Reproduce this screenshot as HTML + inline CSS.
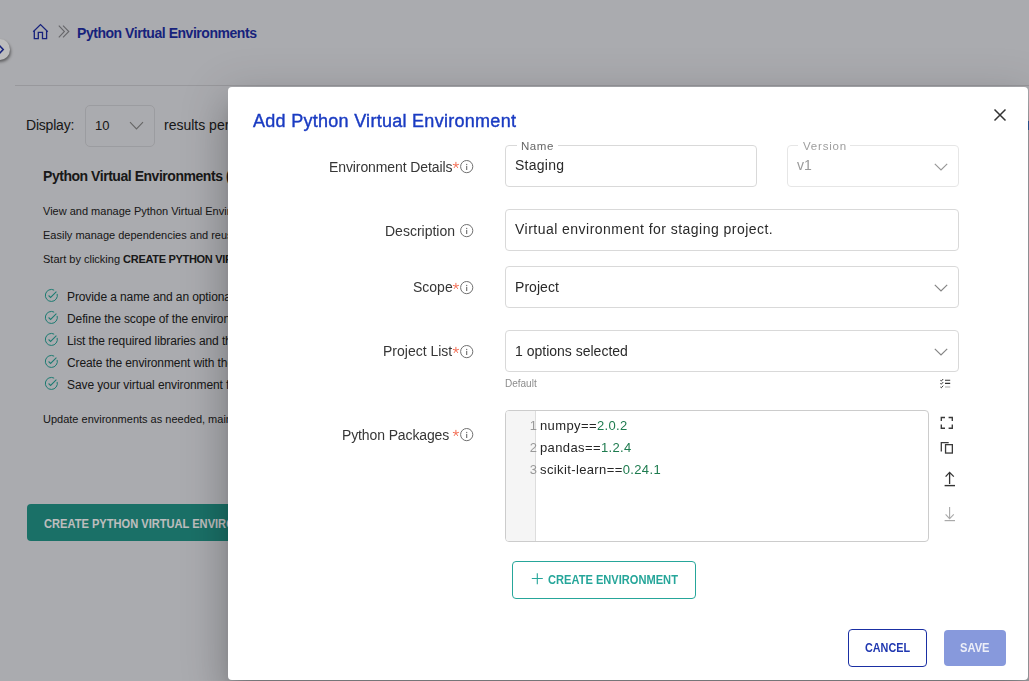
<!DOCTYPE html>
<html><head><meta charset="utf-8">
<style>
*{box-sizing:border-box;margin:0;padding:0}
html,body{width:1029px;height:681px;overflow:hidden;background:#fff;font-family:"Liberation Sans",sans-serif}
.t{position:absolute;white-space:nowrap;line-height:1}
.r{position:absolute;display:block}
#page{position:absolute;left:0;top:0;width:1029px;height:681px;background:#e6e7ec;overflow:hidden}
#overlay{position:absolute;left:0;top:0;width:1029px;height:681px;background:rgba(0,0,0,0.26)}
#modal{will-change:transform;position:absolute;left:228px;top:87px;width:800px;height:593px;background:#fff;border-radius:4px;overflow:hidden;
 box-shadow:0px 11px 15px -7px rgba(0,0,0,0.2),0px 24px 38px 3px rgba(0,0,0,0.14),0px 9px 46px 8px rgba(0,0,0,0.12)}
</style></head>
<body>
<div id="page">
<svg class="r" style="left:32px;top:23px" width="17" height="17" viewBox="0 0 17 17"><path d="M1.2 8.8 L8.5 1.6 L15.8 8.8 M2.3 8 V15.6 H6.3 V9.3 H10.5 V15.6 H14.6 V8" fill="none" stroke="#1f2fa8" stroke-width="1.3" stroke-linejoin="miter"/></svg>
<svg class="r" style="left:57px;top:24px" width="14" height="15" viewBox="0 0 14 15"><path d="M1.8 1.6 L7.4 7.5 L1.8 13.4 M6.0 1.6 L11.8 7.5 L6.0 13.4" fill="none" stroke="#8a8a8f" stroke-width="1.1"/></svg>
<div class="t" style="left:77px;top:26px;font-size:14px;color:#1f2fa8;font-weight:bold;letter-spacing:-0.46px;">Python Virtual Environments</div>
<div class="r" style="left:-11px;top:39px;width:21px;height:21px;border-radius:50%;background:#fff;box-shadow:1px 2px 3px rgba(0,0,0,0.45)"></div>
<svg class="r" style="left:-2px;top:44px" width="8" height="11" viewBox="0 0 8 11"><path d="M1 1 L5.2 5.5 L1 10" fill="none" stroke="#1f2fa8" stroke-width="1.6"/></svg>
<div class="r" style="left:15px;top:85px;width:1014px;height:1px;background:#cdced3"></div>
<div class="t" style="left:26px;top:118px;font-size:14px;color:#222;letter-spacing:-0.2px;">Display:</div>
<div class="r" style="left:85px;top:105px;width:70px;height:42px;border:1px solid #d2d3d8;border-radius:5px"></div>
<div class="t" style="left:95px;top:119px;font-size:13px;color:#222;">10</div>
<svg class="r" style="left:129px;top:121px" width="15" height="10" viewBox="0 0 15 10"><path d="M1 1.2 L7.5 8 L14 1.2" fill="none" stroke="#8a8a8a" stroke-width="1.1"/></svg>
<div class="t" style="left:164px;top:118px;font-size:14px;color:#222;">results per page</div>
<div class="t" style="left:43px;top:169px;font-size:14px;color:#222;font-weight:bold;letter-spacing:-0.46px;">Python Virtual Environments (Beta)</div>
<div class="t" style="left:43px;top:206px;font-size:11px;color:#222;">View and manage Python Virtual Environments for your projects.</div>
<div class="t" style="left:43px;top:230px;font-size:11px;color:#222;">Easily manage dependencies and reuse environments across projects.</div>
<div class="t" style="left:43px;top:254px;font-size:11px;color:#222;">Start by clicking <b style="letter-spacing:-0.3px">CREATE PYTHON VIRTUAL ENVIRONMENT</b> button.</div>
<svg class="r" style="left:44px;top:288px" width="15" height="15" viewBox="0 0 15 15"><path d="M13.15 5.90 A6.0 6.0 0 1 1 10.17 2.15" fill="none" stroke="#26a69a" stroke-width="1.0"/><path d="M4.6 7.5 L6.6 9.4 L12.4 3.7" fill="none" stroke="#26a69a" stroke-width="1.05"/></svg>
<div class="t" style="left:67px;top:291px;font-size:12px;color:#222;letter-spacing:-0.1px;">Provide a name and an optional description.</div>
<svg class="r" style="left:44px;top:310px" width="15" height="15" viewBox="0 0 15 15"><path d="M13.15 5.90 A6.0 6.0 0 1 1 10.17 2.15" fill="none" stroke="#26a69a" stroke-width="1.0"/><path d="M4.6 7.5 L6.6 9.4 L12.4 3.7" fill="none" stroke="#26a69a" stroke-width="1.05"/></svg>
<div class="t" style="left:67px;top:313px;font-size:12px;color:#222;letter-spacing:-0.1px;">Define the scope of the environment.</div>
<svg class="r" style="left:44px;top:332px" width="15" height="15" viewBox="0 0 15 15"><path d="M13.15 5.90 A6.0 6.0 0 1 1 10.17 2.15" fill="none" stroke="#26a69a" stroke-width="1.0"/><path d="M4.6 7.5 L6.6 9.4 L12.4 3.7" fill="none" stroke="#26a69a" stroke-width="1.05"/></svg>
<div class="t" style="left:67px;top:335px;font-size:12px;color:#222;letter-spacing:-0.1px;">List the required libraries and their versions.</div>
<svg class="r" style="left:44px;top:354px" width="15" height="15" viewBox="0 0 15 15"><path d="M13.15 5.90 A6.0 6.0 0 1 1 10.17 2.15" fill="none" stroke="#26a69a" stroke-width="1.0"/><path d="M4.6 7.5 L6.6 9.4 L12.4 3.7" fill="none" stroke="#26a69a" stroke-width="1.05"/></svg>
<div class="t" style="left:67px;top:357px;font-size:12px;color:#222;letter-spacing:-0.1px;">Create the environment with the packages.</div>
<svg class="r" style="left:44px;top:376px" width="15" height="15" viewBox="0 0 15 15"><path d="M13.15 5.90 A6.0 6.0 0 1 1 10.17 2.15" fill="none" stroke="#26a69a" stroke-width="1.0"/><path d="M4.6 7.5 L6.6 9.4 L12.4 3.7" fill="none" stroke="#26a69a" stroke-width="1.05"/></svg>
<div class="t" style="left:67px;top:379px;font-size:12px;color:#222;letter-spacing:-0.1px;">Save your virtual environment for reuse.</div>
<div class="t" style="left:43px;top:414px;font-size:11px;color:#222;">Update environments as needed, maintain consistency across projects.</div>
<div class="r" style="left:1028px;top:121px;width:1px;height:9px;background:#3f7fd8"></div>
<div class="r" style="left:27px;top:504px;width:473px;height:37px;border-radius:4px;background:#24978c"></div>
<div class="t" style="left:44px;top:518px;font-size:12px;color:#fff;font-weight:bold;transform:scaleX(0.925);transform-origin:0 0;">CREATE PYTHON VIRTUAL ENVIRONMENT</div>
</div>
<div id="overlay"></div>
<div id="modal">
<div class="t" style="left:25px;top:25px;font-size:18px;color:#1a3bc2;letter-spacing:0.28px;-webkit-text-stroke:0.4px #1a3bc2;">Add Python Virtual Environment</div>
<svg class="r" style="left:765px;top:21px" width="14" height="14" viewBox="0 0 14 14"><path d="M1.5 1.5 L12.5 12.5 M12.5 1.5 L1.5 12.5" fill="none" stroke="#333" stroke-width="1.5"/></svg>
<div class="t" style="left:101px;top:73px;font-size:14px;color:#363636;letter-spacing:-0.1px;">Environment Details</div>
<svg class="r" style="left:224px;top:74px" width="8" height="8" viewBox="0 0 8 8"><path d="M3.9 4.2 V0.9 M3.9 4.2 L0.9 3.3 M3.9 4.2 L6.9 3.3 M3.9 4.2 L2.0 6.9 M3.9 4.2 L5.8 6.9" fill="none" stroke="#f26549" stroke-width="0.95"/></svg>
<svg class="r" style="left:232px;top:73px" width="14" height="14" viewBox="0 0 14 14"><circle cx="6.7" cy="6.6" r="6.1" fill="none" stroke="#707070" stroke-width="1.0"/><rect x="6.1" y="3.9" width="1.15" height="1.15" fill="#707070"/><rect x="6.1" y="5.9" width="1.15" height="4.1" fill="#707070"/></svg>
<div class="t" style="left:157px;top:137px;font-size:14px;color:#363636;">Description</div>
<svg class="r" style="left:232px;top:137px" width="14" height="14" viewBox="0 0 14 14"><circle cx="6.7" cy="6.6" r="6.1" fill="none" stroke="#707070" stroke-width="1.0"/><rect x="6.1" y="3.9" width="1.15" height="1.15" fill="#707070"/><rect x="6.1" y="5.9" width="1.15" height="4.1" fill="#707070"/></svg>
<div class="t" style="left:185px;top:193px;font-size:14px;color:#363636;">Scope</div>
<svg class="r" style="left:224px;top:195px" width="8" height="8" viewBox="0 0 8 8"><path d="M3.9 4.2 V0.9 M3.9 4.2 L0.9 3.3 M3.9 4.2 L6.9 3.3 M3.9 4.2 L2.0 6.9 M3.9 4.2 L5.8 6.9" fill="none" stroke="#f26549" stroke-width="0.95"/></svg>
<svg class="r" style="left:232px;top:194px" width="14" height="14" viewBox="0 0 14 14"><circle cx="6.7" cy="6.6" r="6.1" fill="none" stroke="#707070" stroke-width="1.0"/><rect x="6.1" y="3.9" width="1.15" height="1.15" fill="#707070"/><rect x="6.1" y="5.9" width="1.15" height="4.1" fill="#707070"/></svg>
<div class="t" style="left:155px;top:257px;font-size:14px;color:#363636;">Project List</div>
<svg class="r" style="left:224px;top:259px" width="8" height="8" viewBox="0 0 8 8"><path d="M3.9 4.2 V0.9 M3.9 4.2 L0.9 3.3 M3.9 4.2 L6.9 3.3 M3.9 4.2 L2.0 6.9 M3.9 4.2 L5.8 6.9" fill="none" stroke="#f26549" stroke-width="0.95"/></svg>
<svg class="r" style="left:232px;top:258px" width="14" height="14" viewBox="0 0 14 14"><circle cx="6.7" cy="6.6" r="6.1" fill="none" stroke="#707070" stroke-width="1.0"/><rect x="6.1" y="3.9" width="1.15" height="1.15" fill="#707070"/><rect x="6.1" y="5.9" width="1.15" height="4.1" fill="#707070"/></svg>
<div class="t" style="left:114px;top:341px;font-size:14px;color:#363636;letter-spacing:-0.12px;">Python Packages</div>
<svg class="r" style="left:224px;top:342px" width="8" height="8" viewBox="0 0 8 8"><path d="M3.9 4.2 V0.9 M3.9 4.2 L0.9 3.3 M3.9 4.2 L6.9 3.3 M3.9 4.2 L2.0 6.9 M3.9 4.2 L5.8 6.9" fill="none" stroke="#f26549" stroke-width="0.95"/></svg>
<svg class="r" style="left:232px;top:341px" width="14" height="14" viewBox="0 0 14 14"><circle cx="6.7" cy="6.6" r="6.1" fill="none" stroke="#707070" stroke-width="1.0"/><rect x="6.1" y="3.9" width="1.15" height="1.15" fill="#707070"/><rect x="6.1" y="5.9" width="1.15" height="4.1" fill="#707070"/></svg>
<div class="r" style="left:277px;top:58px;width:252px;height:42px;border:1px solid #d9d9d9;border-radius:4px"></div>
<div class="r" style="left:289px;top:57px;width:41px;height:3px;background:#fff"></div>
<div class="t" style="left:293px;top:54px;font-size:11.5px;color:#666;letter-spacing:0.55px;">Name</div>
<div class="t" style="left:287px;top:71px;font-size:14px;color:#2a2a2a;letter-spacing:0.25px;">Staging</div>
<div class="r" style="left:559px;top:58px;width:172px;height:42px;border:1px solid #e6e6e6;border-radius:4px"></div>
<div class="r" style="left:570px;top:57px;width:52px;height:3px;background:#fff"></div>
<div class="t" style="left:575px;top:54px;font-size:11.5px;color:#9e9e9e;letter-spacing:0.8px;">Version</div>
<div class="t" style="left:569px;top:71px;font-size:14px;color:#9a9a9a;">v1</div>
<svg class="r" style="left:706px;top:76px" width="14" height="8" viewBox="0 0 14 8"><path d="M0.8 0.8 L7 7 L13.2 0.8" fill="none" stroke="#999" stroke-width="1.2"/></svg>
<div class="r" style="left:277px;top:122px;width:454px;height:42px;border:1px solid #d9d9d9;border-radius:4px"></div>
<div class="t" style="left:287px;top:135px;font-size:14px;color:#2a2a2a;letter-spacing:0.47px;">Virtual environment for staging project.</div>
<div class="r" style="left:277px;top:179px;width:454px;height:42px;border:1px solid #d9d9d9;border-radius:4px"></div>
<div class="t" style="left:287px;top:193px;font-size:14px;color:#2a2a2a;letter-spacing:0.05px;">Project</div>
<svg class="r" style="left:706px;top:197px" width="14" height="8" viewBox="0 0 14 8"><path d="M0.8 0.8 L7 7 L13.2 0.8" fill="none" stroke="#858585" stroke-width="1.2"/></svg>
<div class="r" style="left:277px;top:243px;width:454px;height:42px;border:1px solid #d9d9d9;border-radius:4px"></div>
<div class="t" style="left:287px;top:257px;font-size:14px;color:#2a2a2a;">1 options selected</div>
<svg class="r" style="left:706px;top:261px" width="14" height="8" viewBox="0 0 14 8"><path d="M0.8 0.8 L7 7 L13.2 0.8" fill="none" stroke="#858585" stroke-width="1.2"/></svg>
<div class="t" style="left:277px;top:292px;font-size:10px;color:#8c8c8c;">Default</div>
<svg class="r" style="left:711px;top:290px" width="13" height="12" viewBox="0 0 13 12"><path d="M1.4 3.3 L2.3 4.1 L4.2 2.0 M1.4 6.4 L2.3 7.2 L4.2 5.1 M1.4 10.0 L2.3 10.8 L4.2 8.7" fill="none" stroke="#333" stroke-width="1.0"/><path d="M6.0 3.3 H11.2 M6.0 6.4 H11.2" stroke="#333" stroke-width="1.1"/><path d="M6.0 10.0 H11.2" stroke="#b0b0b0" stroke-width="1.1"/></svg>
<div class="r" style="left:277px;top:323px;width:424px;height:132px;border:1px solid #cccccc;border-radius:4px;overflow:hidden"></div>
<div class="r" style="left:278px;top:324px;width:30px;height:130px;background:#f5f5f5;border-right:1px solid #dddddd;border-radius:3px 0 0 3px"></div>
<div class="t" style="left:293px;top:332px;font-size:13px;color:#999;width:16px;text-align:right;">1</div>
<div class="t" style="left:312px;top:332px;font-size:13px;color:#262626;letter-spacing:0.38px;">numpy==<span style="color:#1e7b4f">2.0.2</span></div>
<div class="t" style="left:293px;top:354px;font-size:13px;color:#999;width:16px;text-align:right;">2</div>
<div class="t" style="left:312px;top:354px;font-size:13px;color:#262626;letter-spacing:0.38px;">pandas==<span style="color:#1e7b4f">1.2.4</span></div>
<div class="t" style="left:293px;top:376px;font-size:13px;color:#999;width:16px;text-align:right;">3</div>
<div class="t" style="left:312px;top:376px;font-size:13px;color:#262626;letter-spacing:0.38px;">scikit-learn==<span style="color:#1e7b4f">0.24.1</span></div>
<svg class="r" style="left:712px;top:329px" width="14" height="14" viewBox="0 0 14 14"><path d="M1.3 5.1 V1.5 H5.0 M8.6 1.5 H12.3 V5.1 M12.3 8.6 V12.2 H8.6 M5.0 12.2 H1.3 V8.6" fill="none" stroke="#3a3a3a" stroke-width="1.35"/></svg>
<svg class="r" style="left:712px;top:354px" width="14" height="14" viewBox="0 0 14 14"><path d="M1.3 10.4 V1.65 H8.7" fill="none" stroke="#3a3a3a" stroke-width="1.3"/><rect x="5.55" y="3.65" width="6.8" height="8.4" fill="none" stroke="#3a3a3a" stroke-width="1.3"/></svg>
<svg class="r" style="left:716px;top:384px" width="12" height="16" viewBox="0 0 12 16"><path d="M5.6 13 V1.6 M1.6 5.6 L5.6 1.4 L9.8 5.6" fill="none" stroke="#333" stroke-width="1.3"/><path d="M0.6 14.6 H11" stroke="#333" stroke-width="1.4"/></svg>
<svg class="r" style="left:716px;top:419px" width="12" height="16" viewBox="0 0 12 16"><path d="M5.6 1 V12.4 M1.6 8.4 L5.6 12.6 L9.8 8.4" fill="none" stroke="#aaa" stroke-width="1.1"/><path d="M0.6 14.6 H11" stroke="#aaa" stroke-width="1.2"/></svg>
<div class="r" style="left:284px;top:474px;width:184px;height:38px;border:1px solid #26a69a;border-radius:4px"></div>
<svg class="r" style="left:303px;top:486px" width="13" height="12" viewBox="0 0 13 12"><path d="M6.3 0.3 V11.3 M0.8 5.5 H11.8" stroke="#26a69a" stroke-width="1.1"/></svg>
<div class="t" style="left:320px;top:487px;font-size:12px;color:#26a69a;font-weight:bold;transform:scaleX(0.925);transform-origin:0 0;">CREATE ENVIRONMENT</div>
<div class="r" style="left:620px;top:542px;width:79px;height:38px;border:1px solid #1a2fa3;border-radius:4px"></div>
<div class="t" style="left:637px;top:555px;font-size:12px;color:#1f37b0;font-weight:bold;transform:scaleX(0.9);transform-origin:0 0;">CANCEL</div>
<div class="r" style="left:716px;top:543px;width:62px;height:36px;background:#8799dc;border-radius:4px"></div>
<div class="t" style="left:732px;top:555px;font-size:12px;color:#eceef8;font-weight:bold;transform:scaleX(0.93);transform-origin:0 0;">SAVE</div>
</div>
</body></html>
